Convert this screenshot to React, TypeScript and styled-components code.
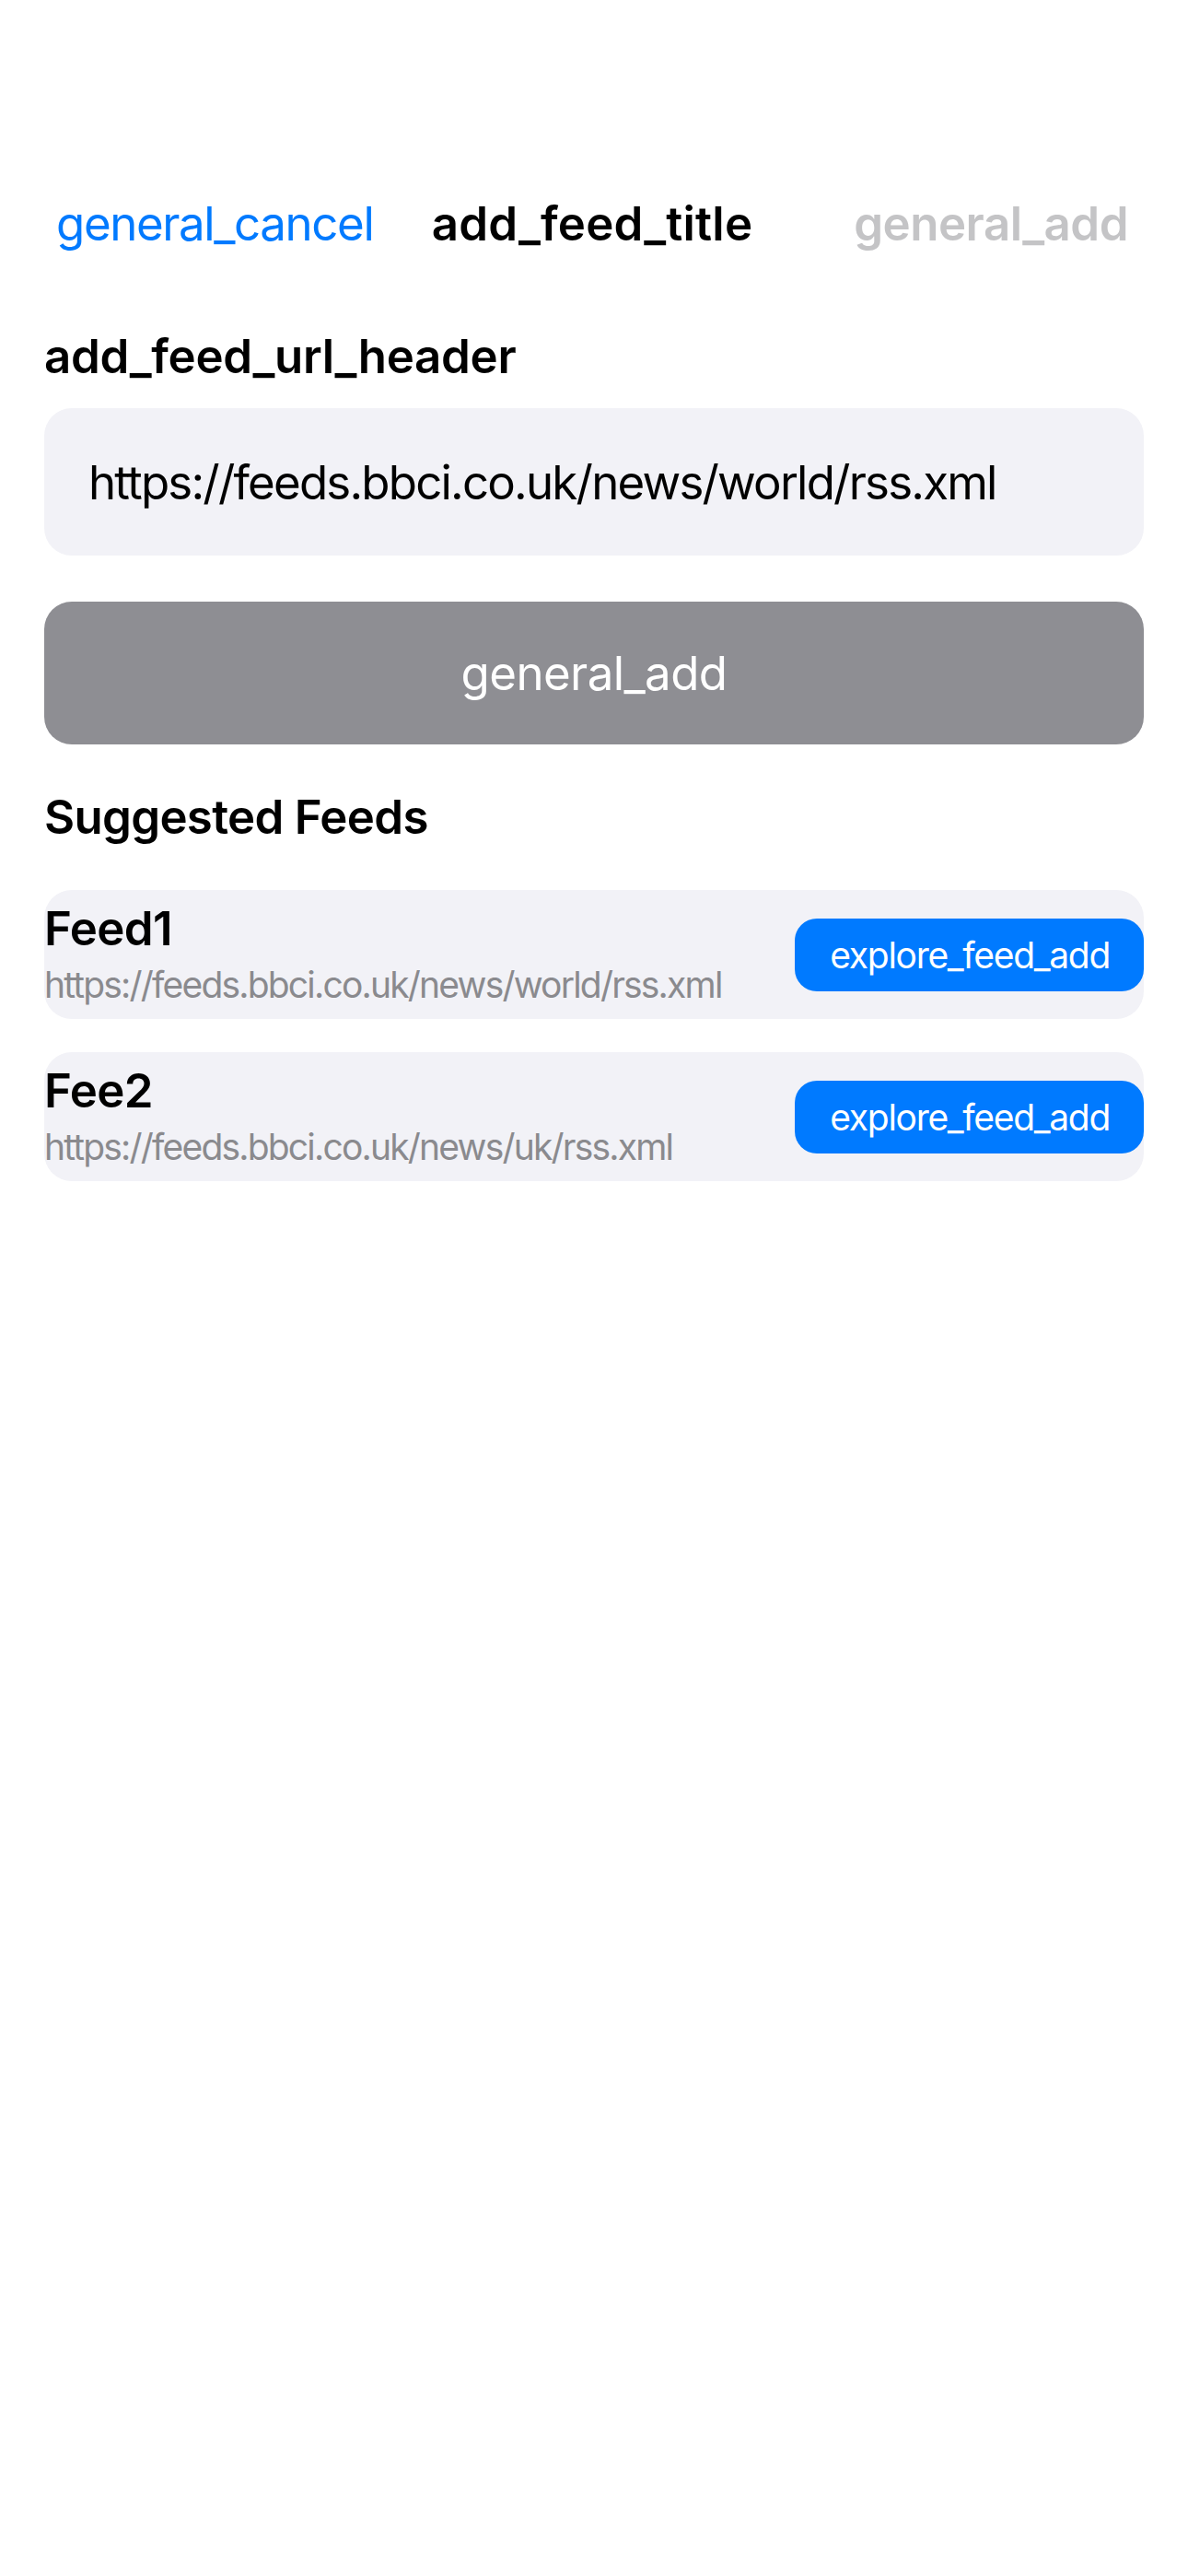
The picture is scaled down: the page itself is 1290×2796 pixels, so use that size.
import React from "react";
import styled, { createGlobalStyle } from "styled-components";

const Global = createGlobalStyle`
  html, body { margin: 0; padding: 0; background: #ffffff; }
  body { font-family: Inter, "Noto Sans", "Liberation Sans", sans-serif; -webkit-font-smoothing: antialiased; }
  * { box-sizing: border-box; }
`;

const Screen = styled.div`
  width: 1290px;
  min-height: 2796px;
  background: #ffffff;
  padding-top: 177px;
  display: flex;
  flex-direction: column;
`;

const NavBar = styled.div`
  height: 132px;
  display: grid;
  grid-template-columns: 1fr auto 1fr;
  align-items: center;
  padding: 0 65px 0 61px;
`;

const NavButton = styled.span<{ $align: "left" | "right"; $disabled?: boolean }>`
  justify-self: ${(p) => (p.$align === "left" ? "start" : "end")};
  font-size: 51px;
  line-height: 66px;
  font-weight: ${(p) => (p.$disabled ? 600 : 400)};
  color: ${(p) => (p.$disabled ? "#c4c4c6" : "#007aff")};
  letter-spacing: ${(p) => (p.$disabled ? "-0.5px" : "-1.4px")};
`;

const NavTitle = styled.span`
  font-size: 51px;
  line-height: 66px;
  font-weight: 600;
  color: #000000;
  letter-spacing: 0.2px;
`;

const Content = styled.div`
  padding: 0 48px;
  display: flex;
  flex-direction: column;
`;

const SectionHeader = styled.h2<{ $top: number; $bottom: number; $tracking: number }>`
  margin: ${(p) => p.$top}px 0 ${(p) => p.$bottom}px 0;
  font-size: 51px;
  line-height: 66px;
  font-weight: 600;
  color: #000000;
  letter-spacing: ${(p) => p.$tracking}px;
`;

const UrlField = styled.div`
  height: 160px;
  border-radius: 30px;
  background: #f2f2f7;
  display: flex;
  align-items: center;
  padding: 0 48px;
  font-size: 51px;
  color: #000000;
  letter-spacing: -1.8px;
`;

const PrimaryButton = styled.button`
  margin-top: 50px;
  height: 155px;
  border: none;
  border-radius: 30px;
  background: #8e8e93;
  color: #ffffff;
  font-family: inherit;
  font-size: 51px;
  font-weight: 400;
  letter-spacing: -0.6px;
  display: flex;
  align-items: center;
  justify-content: center;
`;

const FeedList = styled.div`
  display: flex;
  flex-direction: column;
  gap: 36px;
`;

const FeedCard = styled.div`
  height: 140px;
  background: #f2f2f7;
  border-radius: 30px;
  display: flex;
  align-items: center;
  justify-content: space-between;
`;

const FeedText = styled.div`
  display: flex;
  flex-direction: column;
  padding: 12px 0 14px 0;
  align-self: stretch;
`;

const FeedName = styled.span`
  font-size: 51px;
  line-height: 60px;
  font-weight: 600;
  color: #000000;
  letter-spacing: -0.6px;
`;

const FeedUrl = styled.span`
  margin-top: 8px;
  font-size: 39px;
  line-height: 46px;
  color: #8a8a8e;
  letter-spacing: -1.8px;
`;

const AddChip = styled.button`
  height: 79px;
  padding: 0 37px 0 38px;
  border: none;
  border-radius: 24px;
  background: #007aff;
  color: #ffffff;
  font-family: inherit;
  font-size: 39px;
  letter-spacing: -1.3px;
  display: flex;
  align-items: center;
`;

const feeds = [
  { name: "Feed1", url: "https://feeds.bbci.co.uk/news/world/rss.xml" },
  { name: "Fee2", url: "https://feeds.bbci.co.uk/news/uk/rss.xml" },
];

export default function App() {
  return (
    <>
      <Global />
      <Screen>
        <NavBar>
          <NavButton $align="left">general_cancel</NavButton>
          <NavTitle>add_feed_title</NavTitle>
          <NavButton $align="right" $disabled>
            general_add
          </NavButton>
        </NavBar>
        <Content>
          <SectionHeader $top={45} $bottom={23} $tracking={-0.3}>
            add_feed_url_header
          </SectionHeader>
          <UrlField>https://feeds.bbci.co.uk/news/world/rss.xml</UrlField>
          <PrimaryButton>general_add</PrimaryButton>
          <SectionHeader $top={46} $bottom={46} $tracking={-0.7}>
            Suggested Feeds
          </SectionHeader>
          <FeedList>
            {feeds.map((f) => (
              <FeedCard key={f.name}>
                <FeedText>
                  <FeedName>{f.name}</FeedName>
                  <FeedUrl>{f.url}</FeedUrl>
                </FeedText>
                <AddChip>explore_feed_add</AddChip>
              </FeedCard>
            ))}
          </FeedList>
        </Content>
      </Screen>
    </>
  );
}
